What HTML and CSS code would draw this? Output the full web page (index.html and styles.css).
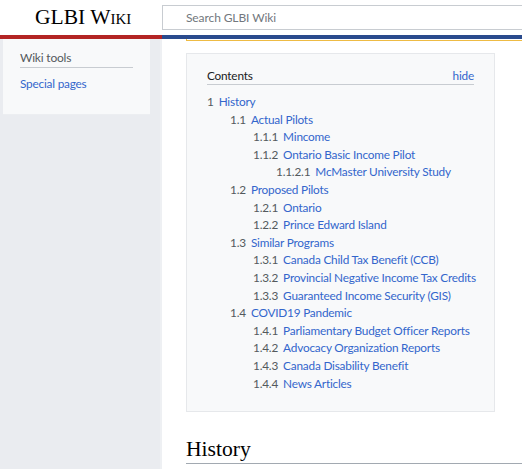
FILE: index.html
```html
<!DOCTYPE html>
<html lang="en">
<head>
    <meta charset="UTF-8">
    <meta name="viewport" content="width=device-width, initial-scale=1.0">
    <title>GLBI Wiki</title>
    <link rel="stylesheet" href="styles.css">
</head>
<body>
    <header class="topbar">
        <div class="logo">GLBI Wiki</div>
        <div class="search">
            <input type="text" class="search-input" placeholder="Search GLBI Wiki">
        </div>
    </header>
    <div class="stripe">
        <span class="stripe-red"></span>
        <span class="stripe-blue"></span>
    </div>

    <div class="page">
        <aside class="sidebar">
            <div class="portal">
                <h3 class="portal-heading">Wiki tools</h3>
                <ul class="portal-list">
                    <li><a href="#">Special pages</a></li>
                </ul>
            </div>
        </aside>

        <main class="content">
            <div class="notice"></div>

            <div class="toc">
                <div class="toc-title">
                    <span>Contents</span>
                    <a href="#" class="toc-toggle">hide</a>
                </div>
                <ul class="toc-list">
                    <li><a href="#"><span class="num">1</span>History</a>
                        <ul>
                            <li><a href="#"><span class="num">1.1</span>Actual Pilots</a>
                                <ul>
                                    <li><a href="#"><span class="num">1.1.1</span>Mincome</a></li>
                                    <li><a href="#"><span class="num">1.1.2</span>Ontario Basic Income Pilot</a>
                                        <ul>
                                            <li><a href="#"><span class="num">1.1.2.1</span>McMaster University Study</a></li>
                                        </ul>
                                    </li>
                                </ul>
                            </li>
                            <li><a href="#"><span class="num">1.2</span>Proposed Pilots</a>
                                <ul>
                                    <li><a href="#"><span class="num">1.2.1</span>Ontario</a></li>
                                    <li><a href="#"><span class="num">1.2.2</span>Prince Edward Island</a></li>
                                </ul>
                            </li>
                            <li><a href="#"><span class="num">1.3</span>Similar Programs</a>
                                <ul>
                                    <li><a href="#"><span class="num">1.3.1</span>Canada Child Tax Benefit (CCB)</a></li>
                                    <li><a href="#"><span class="num">1.3.2</span>Provincial Negative Income Tax Credits</a></li>
                                    <li><a href="#"><span class="num">1.3.3</span>Guaranteed Income Security (GIS)</a></li>
                                </ul>
                            </li>
                            <li><a href="#"><span class="num">1.4</span>COVID19 Pandemic</a>
                                <ul>
                                    <li><a href="#"><span class="num">1.4.1</span>Parliamentary Budget Officer Reports</a></li>
                                    <li><a href="#"><span class="num">1.4.2</span>Advocacy Organization Reports</a></li>
                                    <li><a href="#"><span class="num">1.4.3</span>Canada Disability Benefit</a></li>
                                    <li><a href="#"><span class="num">1.4.4</span>News Articles</a></li>
                                </ul>
                            </li>
                        </ul>
                    </li>
                </ul>
            </div>

            <h2 class="section-heading">History</h2>
        </main>
    </div>
</body>
</html>
```

FILE: styles.css
```css
html, body {
    margin: 0;
    padding: 0;
    height: 100%;
    overflow: hidden;
}
body {
    font-family: Lato, Arial, sans-serif;
    font-size: 11.8px;
    letter-spacing: -0.2px;
    color: #202122;
    background-color: #fff;
}
a {
    color: #3366cc;
    text-decoration: none;
}
ul {
    list-style: none;
    margin: 0;
    padding: 0;
}

/* header */
.topbar {
    display: flex;
    height: 35px;
    background: #fff;
}
.logo {
    width: 127px;
    flex-shrink: 0;
    padding-left: 35px;
    font-family: "Liberation Serif", "Times New Roman", serif;
    font-variant: small-caps;
    font-size: 21.5px;
    letter-spacing: 0;
    line-height: 34px;
    color: #000;
}
.search {
    padding-top: 5px;
}
.search-input {
    box-sizing: border-box;
    width: 420px;
    height: 25px;
    margin: 0;
    padding: 0 0 0 23px;
    border: 1px solid #c8ccd1;
    font-family: Lato, Arial, sans-serif;
    font-size: 12px;
    letter-spacing: -0.1px;
    color: #202122;
    outline: none;
}
.search-input::placeholder {
    color: #72777d;
}
.stripe {
    display: flex;
    height: 4px;
}
.stripe-red {
    width: 162px;
    background: #b32424;
}
.stripe-blue {
    flex: 1;
    background: #2a4b8d;
}

/* layout */
.page {
    display: flex;
    min-height: calc(100% - 39px);
}
.sidebar {
    width: 160px;
    flex-shrink: 0;
    background: #eaecf0;
    border-right: 2px solid #eef0f3;
}
.portal {
    margin-left: 3px;
    width: 113px;
    padding: 10px 17px 22px;
    background: #f8f9fa;
    border-bottom: 1px solid #eceef1;
}
.portal-heading {
    margin: 0;
    font-size: 12px;
    font-weight: normal;
    line-height: 18px;
    color: #54595d;
    border-bottom: 1px solid #c8ccd1;
}
.portal-list {
    margin-top: 7px;
    line-height: 17px;
}

.content {
    flex: 1;
    padding-left: 24px;
}
.notice {
    height: 1px;
    border-left: 1px solid #eebb44;
    border-bottom: 1px solid #eebb44;
}

/* table of contents */
.toc {
    width: 267px;
    margin-top: 12px;
    padding: 13px 20px 19px;
    background: #f8f9fa;
    border: 1px solid #e6e8eb;
}
.toc-title {
    display: flex;
    justify-content: space-between;
    line-height: 17px;
    border-bottom: 1px solid #c8ccd1;
}
.toc-list {
    margin-top: 8px;
    line-height: 17.6px;
    white-space: nowrap;
}
.toc-list ul {
    margin-left: 23px;
}
.num {
    color: #54595d;
    padding-right: 5px;
}

.section-heading {
    margin: 23px 0 0;
    font-family: "Liberation Serif", "Times New Roman", serif;
    font-size: 21.6px;
    font-weight: normal;
    letter-spacing: 0;
    line-height: 28px;
    color: #000;
    border-bottom: 1px solid #a2a9b1;
}
```
